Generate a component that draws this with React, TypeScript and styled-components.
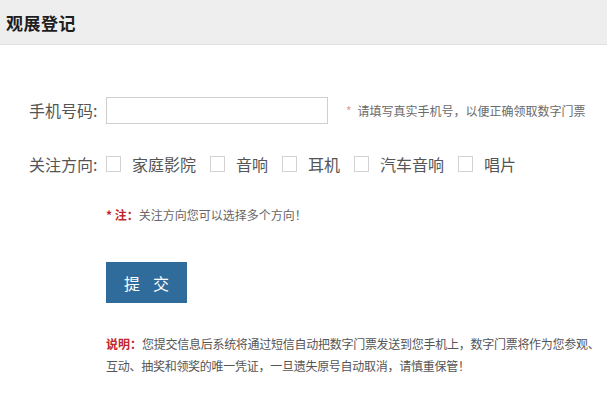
import styled, { createGlobalStyle } from "styled-components";

const GlobalStyle = createGlobalStyle`
  body {
    margin: 0;
    background: #ffffff;
    font-family: "Noto Sans CJK SC", "Noto Sans", sans-serif;
  }
`;

const Header = styled.div`
  height: 44px;
  background-color: #eeeeee;
  border-bottom: 1px solid #e2e2e2;
  display: flex;
  align-items: center;
  padding-left: 6px;
`;

const Title = styled.h1`
  margin: 0;
  font-size: 17px;
  font-weight: 700;
  color: #1e1e1e;
  letter-spacing: 0.5px;
`;

const Form = styled.div`
  padding: 50px 0 0 29px;
  display: flex;
  flex-direction: column;
  align-items: flex-start;
`;

const Row = styled.div`
  display: flex;
  align-items: center;
  height: 30px;
  margin-bottom: ${(p: { $gap?: number }) => p.$gap ?? 0}px;
`;

const Label = styled.span`
  width: 77px;
  font-size: 16px;
  color: #555;
`;

const Input = styled.input`
  box-sizing: border-box;
  width: 222px;
  height: 27px;
  border: 1px solid #cfcfcf;
  outline: none;
  padding: 0 6px;
`;

const Hint = styled.span`
  margin-left: 18px;
  font-size: 12px;
  color: #6a6a6a;
`;

const Star = styled.span`
  color: #e79a9a;
  margin-right: 6px;
`;

const Box = styled.span`
  box-sizing: border-box;
  width: 15px;
  height: 16px;
  border: 1px solid #d2d2d2;
  margin-right: 11px;
`;

const Option = styled.span`
  font-size: 16px;
  color: #555;
  margin-right: 14px;
`;

const Note = styled.div`
  margin-left: 77px;
  font-size: 12px;
  line-height: 20px;
  color: #666;
`;

const Strong = styled.span`
  color: #c0272d;
  font-weight: 700;
  letter-spacing: 0;
`;

const Submit = styled.button`
  display: block;
  margin: 37px 0 0 77px;
  width: 81px;
  height: 41px;
  padding: 0 0 0 13px;
  border: none;
  background-color: #2f6b9b;
  color: #fff;
  font-family: inherit;
  font-size: 16px;
  letter-spacing: 13px;
  white-space: nowrap;
  cursor: pointer;
`;

const Desc = styled.p`
  margin: 30px 0 0 77px;
  font-size: 12px;
  line-height: 22px;
  letter-spacing: -0.27px;
  color: #555;
  white-space: nowrap;
`;

const options = ["家庭影院", "音响", "耳机", "汽车音响", "唱片"];

export default function App() {
  return (
    <>
      <GlobalStyle />
      <Header>
        <Title>观展登记</Title>
      </Header>
      <Form>
        <Row $gap={24}>
          <Label>手机号码:</Label>
          <Input type="text" />
          <Hint>
            <Star>*</Star>请填写真实手机号，以便正确领取数字门票
          </Hint>
        </Row>
        <Row $gap={26}>
          <Label>关注方向:</Label>
          {options.map((o) => (
            <span key={o} style={{ display: "contents" }}>
              <Box />
              <Option>{o}</Option>
            </span>
          ))}
        </Row>
        <Note>
          <Strong>* 注：</Strong>关注方向您可以选择多个方向！
        </Note>
        <Submit>提交</Submit>
        <Desc>
          <Strong>说明：</Strong>
          <span>您提交信息后系统将通过短信自动把数字门票发送到您手机上，数字门票将作为您参观、</span>
          <br />
          <span>互动、抽奖和领奖的唯一凭证，一旦遗失原号自动取消，请慎重保管！</span>
        </Desc>
      </Form>
    </>
  );
}
